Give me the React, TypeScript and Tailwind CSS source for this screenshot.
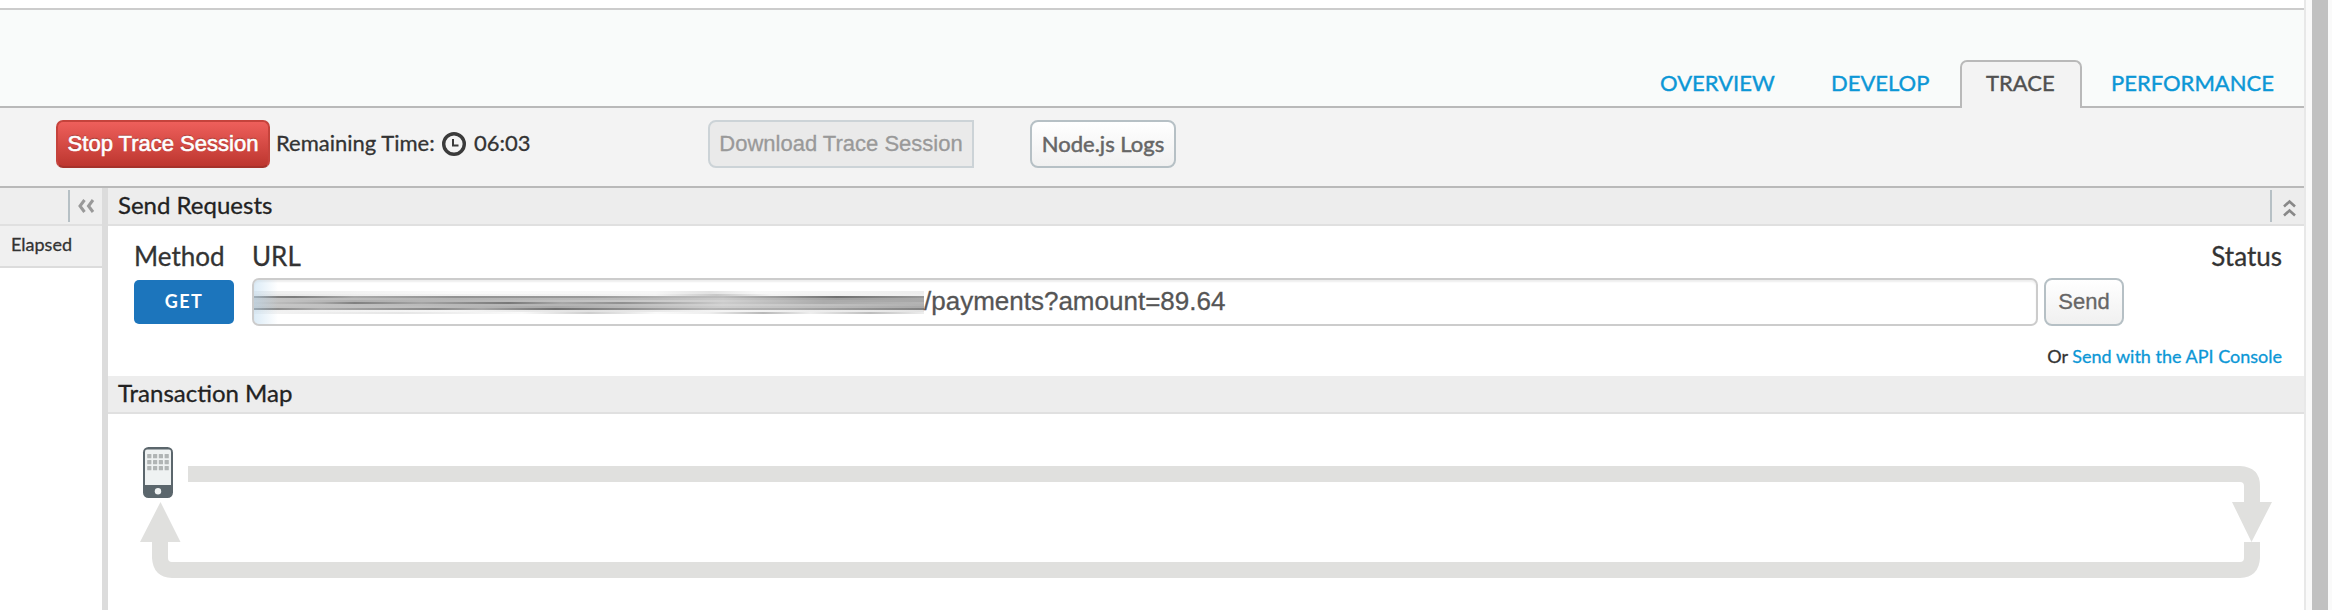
import React from "react";

const lato = "font-['Lato','Liberation_Sans',sans-serif]";
const arial = "font-['Liberation_Sans',Arial,sans-serif]";

function Tabs() {
  return (
    <nav className="flex h-[100px] items-end justify-end border-t-2 border-[#ccc] bg-[#f9fbfa] text-[22px] leading-[46px] text-[#0c97d6]">
      <div className="h-[48px] flex-1 border-b-2 border-[#b9b9b9]" />
      <div className="h-[48px] w-[171px] border-b-2 border-[#b9b9b9] [-webkit-text-stroke:0.4px_#0c97d6]"><a>OVERVIEW</a></div>
      <div className="h-[48px] w-[129px] border-b-2 border-[#b9b9b9] [-webkit-text-stroke:0.4px_#0c97d6]"><a>DEVELOP</a></div>
      <div className="h-[48px] w-[122px] rounded-t-[7px] border-2 border-b-0 border-[#b9b9b9] bg-[#f3f3f3] pl-6 leading-[42px] text-[#505050] [-webkit-text-stroke:0.4px_#505050]"><a>TRACE</a></div>
      <div className="h-[48px] w-[222px] border-b-2 border-[#b9b9b9] pl-[29px] [-webkit-text-stroke:0.4px_#0c97d6]"><a>PERFORMANCE</a></div>
    </nav>
  );
}

function Clock() {
  return (
    <svg className="ml-[7px] h-[26px] w-[26px]" viewBox="0 0 26 26" fill="none" stroke="#3a3a3a">
      <circle cx="13" cy="13" r="10.3" strokeWidth="3.4" />
      <path d="M12 8V14.500H17.500" strokeWidth="2" />
    </svg>
  );
}

function Toolbar() {
  return (
    <div className="flex h-[80px] items-start border-b-2 border-[#b9b9b9] bg-[#f3f3f3] pt-3 text-[22px] leading-[46px] text-[#333]">
      <button className={`ml-[56px] h-[48px] w-[214px] rounded-[7px] border-2 border-[#c5433c] border-b-[#a5322b] bg-linear-to-b from-[#ee5f5b] to-[#bd362f] text-[22px] leading-[44px] whitespace-nowrap text-white [-webkit-text-stroke:0.6px_white] [text-shadow:0_-1px_1px_rgba(0,0,0,0.3)] ${arial}`}>Stop Trace Session</button>
      <span className="ml-[6px] w-[158px] whitespace-nowrap [-webkit-text-stroke:0.3px_#333]">Remaining Time:</span>
      <div className="flex h-[47px] items-center"><Clock /></div>
      <span className="ml-[7px] w-[234px] [-webkit-text-stroke:0.3px_#333]">06:03</span>
      <button className={`h-[48px] w-[266px] rounded-l-[8px] border-2 border-[#ccd3d7] bg-[#eaeaea] text-[22px] leading-[44px] whitespace-nowrap text-[#999] [-webkit-text-stroke:0.3px_#999] ${arial}`}>Download Trace Session</button>
      <button className="ml-[56px] h-[48px] w-[146px] rounded-[8px] border-2 border-[#b6c0c5] bg-linear-to-b from-white to-[#f0f0f0] text-[22px] leading-[42px] whitespace-nowrap text-[#666] [-webkit-text-stroke:0.5px_#666]">Node.js Logs</button>
    </div>
  );
}

function Sidebar() {
  return (
    <aside className="w-[102px] shrink-0">
      <div className="flex h-[38px] border-b-2 border-[#e0e0e0] bg-[#eee] pt-[2px] pl-[68px]">
        <div className="h-8 w-[2px] bg-[#b6c0c5]" />
        <svg className="mt-[9px] ml-[7px] h-[14px] w-[18px]" viewBox="0 0 18 14" fill="none" stroke="#999" strokeWidth="3">
          <path d="M7.500 1L3 7l4.500 6M16 1l-4.500 6 4.500 6" />
        </svg>
      </div>
      <div className="h-[42px] border-b-2 border-[#dcdcdc] bg-[#f0f0f0] pl-[11px] text-[18px] leading-[37px] text-[#333] [-webkit-text-stroke:0.3px_#333]">Elapsed</div>
    </aside>
  );
}

type Streak = { y: number; h: number; stops: [number, string][] };

const streaks: Streak[] = [
  { y: 11, h: 3, stops: [[0, "#eee"], [0.14, "#f2f2f2"], [0.3, "#fafafa"], [0.6, "#f6f6f6"], [0.68, "#e2e2e2"], [0.75, "#f8f8f8"], [1, "#eee"]] },
  { y: 14, h: 2, stops: [[0, "#e8e8e8"], [0.2, "#f0f0f0"], [0.6, "#f3f3f3"], [0.69, "#c8c8c8"], [0.77, "#f3f3f3"], [1, "#f0f0f0"]] },
  { y: 16, h: 2, stops: [[0, "#888"], [0.06, "#7c7c7c"], [0.15, "#a8a8a8"], [0.3, "#929292"], [0.5, "#999"], [0.62, "#b4b4b4"], [0.7, "#bcbcbc"], [0.78, "#9c9c9c"], [0.87, "#707070"], [0.95, "#888"], [1, "#999"]] },
  { y: 18, h: 2, stops: [[0, "#c4c4c4"], [0.3, "#b4b4b4"], [0.6, "#bcbcbc"], [0.7, "#cacaca"], [0.87, "#a0a0a0"], [1, "#aaa"]] },
  { y: 20, h: 2, stops: [[0, "#cacaca"], [0.15, "#b0b0b0"], [0.4, "#bcbcbc"], [0.7, "#d2d2d2"], [0.85, "#acacac"], [1, "#a8a8a8"]] },
  { y: 22, h: 2, stops: [[0, "#c6c6c6"], [0.1, "#a8a8a8"], [0.15, "#808080"], [0.25, "#a5a5a5"], [0.38, "#787878"], [0.46, "#a8a8a8"], [0.55, "#909090"], [0.7, "#ccc"], [0.85, "#acacac"], [1, "#b4b4b4"]] },
  { y: 24, h: 2, stops: [[0, "#c8c8c8"], [0.3, "#b8b8b8"], [0.5, "#b4b4b4"], [0.7, "#d4d4d4"], [1, "#b0b0b0"]] },
  { y: 26, h: 2, stops: [[0, "#c4c4c4"], [0.25, "#bebebe"], [0.45, "#a8a8a8"], [0.7, "#cecece"], [1, "#a8a8a8"]] },
  { y: 28, h: 2, stops: [[0, "#7c7c7c"], [0.1, "#aaa"], [0.27, "#888"], [0.34, "#a4a4a4"], [0.45, "#6e6e6e"], [0.55, "#8c8c8c"], [0.68, "#b4b4b4"], [0.8, "#aaa"], [1, "#808080"]] },
  { y: 30, h: 2, stops: [[0, "#f0f0f0"], [0.3, "#f6f6f6"], [0.5, "#e0e0e0"], [0.7, "#f4f4f4"], [1, "#e4e4e4"]] },
  { y: 32, h: 2, stops: [[0, "#f4f4f4"], [0.22, "#e6e6e6"], [0.4, "#fafafa"], [0.5, "#cecece"], [0.6, "#fafafa"], [0.68, "#eee"], [0.76, "#b8b8b8"], [0.83, "#eee"], [0.92, "#bdbdbd"], [1, "#eee"]] },
];

function Smear() {
  return (
    <svg className="h-[44px] w-[670px] shrink-0" viewBox="0 0 670 44">
      <defs>
        <linearGradient id="edge"><stop stopColor="#b9d8ee" stopOpacity=".5" /><stop offset="1" stopColor="#b9d8ee" stopOpacity="0" /></linearGradient>
        {streaks.map((s) => (
          <linearGradient key={s.y} id={`streak${s.y}`}>
            {s.stops.map(([o, c]) => <stop key={o} offset={o} stopColor={c} />)}
          </linearGradient>
        ))}
      </defs>
      {streaks.map((s) => <rect key={s.y} y={s.y} width="670" height={s.h} fill={`url(#streak${s.y})`} />)}
      <rect width="24" height="44" fill="url(#edge)" />
    </svg>
  );
}

function SectionHeader({ title, collapsible }: { title: string; collapsible?: boolean }) {
  return (
    <div className="flex h-[38px] justify-between border-b-2 border-[#e0e0e0] bg-[#ededed] pl-[10px] text-[24px] leading-[33px] text-[#222]">
      <span className="[-webkit-text-stroke:0.3px_#222]">{title}</span>
      {collapsible && (
        <div className="flex pt-[2px]">
          <div className="h-8 w-[2px] bg-[#b6c0c5]" />
          <svg className="mt-[9px] mr-[8px] ml-[11px] h-[18px] w-[13px]" viewBox="0 0 13 18" fill="none" stroke="#888" strokeWidth="2.6">
            <path d="M1 7.500L6.500 2.500 12 7.500M1 16.500l5.500-5 5.500 5" />
          </svg>
        </div>
      )}
    </div>
  );
}

function Requests() {
  return (
    <section className="h-[150px] text-[#333]">
      <div className="flex h-[52px] pt-[13px] pl-[26px] text-[26px] leading-[34px] [-webkit-text-stroke:0.3px_#333]">
        <span className="w-[118px]">Method</span>
        <span className="flex-1">URL</span>
        <span className="mr-[22px]">Status</span>
      </div>
      <div className="flex h-[48px] items-center pl-[26px]">
        <button className="flex h-[44px] w-[100px] justify-center rounded-[5px] bg-[#1c75bc] text-[18px] leading-[42px] font-bold tracking-[1.4px] text-white">GET</button>
        <div className={`ml-[18px] flex h-[48px] w-[1786px] overflow-hidden rounded-[7px] border-2 border-[#ccc] text-[26px] leading-[42px] text-[#555] shadow-[inset_0_2px_2px_rgba(0,0,0,0.07)] ${arial}`}>
          <Smear />
          <span className="[-webkit-text-stroke:0.3px_#555]">/payments?amount=89.64</span>
        </div>
        <button className={`ml-[6px] h-[48px] w-[80px] rounded-[8px] border-2 border-[#b6c0c5] bg-linear-to-b from-white to-[#f0f0f0] text-[22px] leading-[44px] text-[#666] [-webkit-text-stroke:0.3px_#666] ${arial}`}>Send</button>
      </div>
      <div className="pt-[15px] pr-[22px] text-right text-[18px] leading-[30px] [-webkit-text-stroke:0.3px_#333]">
        Or <a className="text-[#0c97d6] [-webkit-text-stroke:0.3px_#0c97d6]">Send with the API Console</a>
      </div>
    </section>
  );
}

const dots = [0, 1, 2].flatMap((r) => [0, 1, 2, 3].map((c) => ({ x: 4.2 + c * 5.8, y: 7 + r * 6 })));

function TransactionMap() {
  return (
    <svg className="h-[196px] w-[2196px]" viewBox="108 414 2196 196">
      <g transform="translate(143 447)">
        <rect width="30" height="51" rx="5.500" fill="#5b666c" />
        <path d="M2 4.500Q2 2.500 4 2.500H26Q28 2.500 28 4.500V38H2Z" fill="#eff2f2" />
        {dots.map((d) => <rect key={`${d.x}-${d.y}`} x={d.x} y={d.y} width="4.200" height="4.200" rx=".5" fill="#b1b5b5" />)}
        <circle cx="15" cy="44.300" r="3.200" fill="#eff2f2" />
      </g>
      <g fill="#e0e0de">
        <path d="M188 466H2240Q2260 467 2260 486V502H2272L2251.500 542 2232 502H2244V486Q2244 482 2240 482H188Z" />
        <path d="M160.500 502L180.500 542H168V558Q168 562 172 562H2240Q2244 562 2244 558V542H2260V558Q2259 577 2240 578H172Q153 577 152 558V542H140Z" />
      </g>
    </svg>
  );
}

export default function App() {
  return (
    <div className={`flex h-[610px] w-[2332px] overflow-hidden bg-[#fafafa] ${lato}`}>
      <div className="w-[2306px] border-r-2 border-[#e8e8e8] bg-white pt-2">
        <Tabs />
        <Toolbar />
        <div className="flex h-[422px]">
          <Sidebar />
          <main className="w-[2202px] border-l-[6px] border-[#dcdcdc]">
            <SectionHeader title="Send Requests" collapsible />
            <Requests />
            <SectionHeader title="Transaction Map" />
            <TransactionMap />
          </main>
        </div>
      </div>
      <div className="ml-[6px] w-4 bg-[#c1c1c1]" />
    </div>
  );
}
